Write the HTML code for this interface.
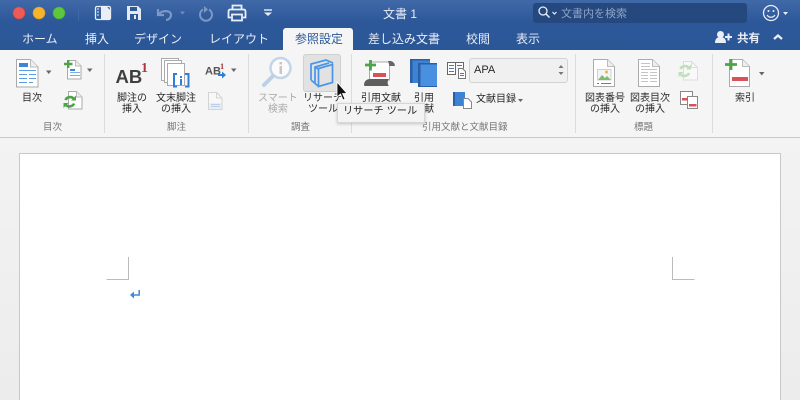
<!DOCTYPE html>
<html lang="ja"><head><meta charset="utf-8">
<style>
html{margin:0;padding:0;width:800px;height:400px;overflow:hidden}
body{margin:0;padding:0;width:800px;height:400px;overflow:hidden;position:relative;background:#ededed;font-family:"Liberation Sans","Noto Sans CJK JP",sans-serif}
.a{position:absolute}
.t{position:absolute;white-space:nowrap;text-align:center;line-height:10.500px;font-size:10px;color:#2a2a2a}
.tab{position:absolute;top:31px;line-height:17px;font-size:12px;color:#e9eef7;white-space:nowrap}
.g{position:absolute;top:122px;line-height:12px;font-size:9.500px;color:#777;white-space:nowrap;text-align:center}
.sep{position:absolute;top:54px;height:79px;width:1px;background:#dcdcdc}
</style></head><body>
<div class="a" style="left:0;top:0;width:800px;height:50px;background:linear-gradient(#4069a8,#2c5798 45%,#2b5797)"></div>
<div class="a" style="left:0;top:50px;width:800px;height:87px;background:#f5f5f5;border-bottom:1px solid #c9c9c9"></div>
<div class="a" style="left:0;top:138px;width:800px;height:262px;background:linear-gradient(#f3f3f3,#ececec)"></div>
<div class="a" style="left:19px;top:153px;width:760px;height:247px;background:#fff;border:1px solid #c8c8c8;border-bottom:0"></div>

<div class="a" style="left:283px;top:28px;width:70px;height:22px;background:#f5f5f5;border-radius:3px 3px 0 0"></div>
<div class="tab" style="left:22px">ホーム</div>
<div class="tab" style="left:85px">挿入</div>
<div class="tab" style="left:134px">デザイン</div>
<div class="tab" style="left:209px">レイアウト</div>
<div class="tab" style="left:295px;color:#2b5797">参照設定</div>
<div class="tab" style="left:368px">差し込み文書</div>
<div class="tab" style="left:466px">校閲</div>
<div class="tab" style="left:516px">表示</div>
<div class="tab" style="left:737px;font-weight:bold;font-size:11.500px">共有</div>
<div class="t" style="left:383px;top:7px;font-size:12px;line-height:15px;color:#e9eef7">文書 1</div>
<div class="a" style="left:533px;top:3px;width:214px;height:20px;background:#25497f;border-radius:3px"></div>
<div class="t" style="left:561px;top:7px;font-size:11px;line-height:14px;color:#8ea4c6">文書内を検索</div>

<div class="a" style="left:303px;top:54px;width:36px;height:36px;background:#e2e2e2;border:1px solid #cfcfcf;border-radius:3px"></div>

<svg class="a" style="left:0;top:0" width="800" height="400" viewBox="0 0 800 400">
<!-- traffic lights -->
<circle cx="19" cy="13" r="6" fill="#ee5a55" stroke="#c94440" stroke-width=".6"/>
<circle cx="39" cy="13" r="6" fill="#f4b42e" stroke="#d0952a" stroke-width=".6"/>
<circle cx="59" cy="13" r="6" fill="#5fc63f" stroke="#47a330" stroke-width=".6"/>
<path d="M78.500 6v15" stroke="#3f68a6"/>
<!-- sidebar -->
<rect x="95.500" y="6.500" width="15" height="13" rx="1.500" fill="none" stroke="#e9eef7" stroke-width="1.300"/>
<path d="M101 7h6l4 4v8h-10z" fill="#e9eef7"/><path d="M97 9h2M97 12h2M97 15h2" stroke="#e9eef7"/>
<!-- save -->
<path d="M127 6h11l3 3v11h-14z" fill="#e4e9f2"/><rect x="130" y="7" width="7" height="4" fill="#2f5a9a"/><rect x="130" y="14" width="8" height="6" fill="#2f5a9a"/><rect x="134" y="15" width="2" height="4" fill="#e4e9f2"/>
<!-- undo -->
<path d="M158 9v6h6" fill="none" stroke="#7c98c4" stroke-width="2.200"/><path d="M159 14c3-4 12-4 12 1 0 3-3 5-5 5" fill="none" stroke="#7c98c4" stroke-width="2.200"/>
<path d="M180 11.500h5l-2.500 3z" fill="#7290bd"/>
<!-- redo -->
<path d="M203 9.500a6 6 0 1 0 6 0" fill="none" stroke="#7c98c4" stroke-width="2"/><path d="M204 6v7l4-3.500z" fill="#7c98c4"/>
<!-- print -->
<path d="M232.500 9V5.500h9V9" fill="none" stroke="#e9eef7" stroke-width="1.800"/><path d="M231 17.500h-2.500v-6q0-2 2-2h13q2 0 2 2v6H243" fill="none" stroke="#e9eef7" stroke-width="1.800"/><rect x="232" y="14.500" width="10" height="6" fill="none" stroke="#e9eef7" stroke-width="1.800"/>
<!-- qat dropdown -->
<path d="M264 10h8" stroke="#e9eef7" stroke-width="1.400"/><path d="M264 12.500h8l-4 3.500z" fill="#e9eef7"/>
<!-- search -->
<circle cx="543" cy="11" r="4" fill="none" stroke="#e9eef7" stroke-width="1.300"/><path d="M546 14l3.500 3.500" stroke="#e9eef7" stroke-width="1.500"/><path d="M552.500 12l2 2 2-2" fill="none" stroke="#e9eef7" stroke-width="1.200"/>
<!-- smiley -->
<circle cx="771" cy="13" r="7.500" fill="none" stroke="#e9eef7" stroke-width="1.300"/><circle cx="768.500" cy="11" r="1" fill="#e9eef7"/><circle cx="773.500" cy="11" r="1" fill="#e9eef7"/><path d="M767 15c2 3 6 3 8 0" fill="none" stroke="#e9eef7" stroke-width="1.200"/>
<path d="M783 12h5l-2.500 3z" fill="#e9eef7"/>
<!-- share person -->
<circle cx="720.500" cy="34.500" r="3.500" fill="#e9eef7"/><path d="M715 43q0-6 5.500-6t5.500 6z" fill="#e9eef7"/><path d="M725 37h7M728.500 33.500v7" stroke="#e9eef7" stroke-width="2"/>
<path d="M774 39l4-3.500 4 3.500" fill="none" stroke="#e9eef7" stroke-width="2.200"/>

<!-- 目次 -->
<path d="M16.500 59.500h14l7.500 7.500v20h-21.500z" fill="#fff" stroke="#aaa"/><path d="M30.500 59.500v7.500h7.500" fill="#eee" stroke="#bbb"/>
<rect x="19" y="63" width="9" height="4" fill="#3d85d8"/>
<path d="M19 70.500h17M19 74.500h8M29 74.500h7M19 78.500h8M29 78.500h7M19 82.500h8M29 82.500h4" stroke="#5a9ce6"/>
<path d="M46 70.500h5.500l-2.750 3.500z" fill="#666"/>
<!-- add text -->
<path d="M67.500 60.500h8l5.500 5.500v13h-13.500z" fill="#fff" stroke="#aaa"/><path d="M75.500 60.500v5.500h5.500" fill="#eee" stroke="#bbb"/>
<path d="M64 64h8.500M68.200 60v8" stroke="#4ea348" stroke-width="2.400"/>
<rect x="70" y="69" width="5" height="2" fill="#3d85d8"/><path d="M70 72.500h10M70 75.500h10" stroke="#7aaee8"/>
<path d="M87 68.500h5.500l-2.750 3.500z" fill="#666"/>
<!-- update -->
<path d="M68.500 91.500h8l5.500 5.500v12h-13.500z" fill="#fff" stroke="#aaa"/><path d="M76.500 91.500v5.500h5.500" fill="#eee" stroke="#bbb"/>
<path d="M65.500 100c1-3 6-4 8-1.500M74 103.500c-1 3-6 4-8 1.500" fill="none" stroke="#4ea348" stroke-width="2.600"/><path d="M71 100.500h5v-5zM68.500 103h-5v5z" fill="#4ea348"/>

<!-- AB1 -->
<text x="115.500" y="83" font-size="18.500" font-weight="bold" fill="#3f3f3f" font-family="Liberation Sans">AB</text>
<text x="141" y="72" font-size="14" font-weight="bold" fill="#a9383c" font-family="Liberation Serif">1</text>
<!-- endnote -->
<path d="M161.500 58.500h17v22h-17z" fill="#fff" stroke="#aaa"/><path d="M164.500 60.500h17v22h-17z" fill="#fff" stroke="#aaa"/><path d="M167.500 63.500h17v22h-17z" fill="#fff" stroke="#aaa"/>
<path d="M177 74h-3v12.500h3M185 74h3.500v12.500H185" fill="none" stroke="#2f7fd8" stroke-width="2"/>
<rect x="180" y="76" width="2" height="2" fill="#2f7fd8"/><rect x="180" y="79" width="2" height="6" fill="#2f7fd8"/>
<!-- AB next -->
<text x="205" y="74.500" font-size="11" font-weight="bold" fill="#555" font-family="Liberation Sans">AB</text>
<text x="220" y="69" font-size="8.500" font-weight="bold" fill="#a9383c" font-family="Liberation Serif">1</text>
<path d="M218 74h4v-2.500l4 3.500-4 3.500v-2.500h-4z" fill="#2f7fd8"/>
<path d="M231 68.500h5.500l-2.750 3.500z" fill="#666"/>
<!-- show notes disabled -->
<path d="M208.500 92.500h8l5.500 5.500v11.500h-13.500z" fill="#f8f8f8" stroke="#d4d4d4"/><path d="M216.500 92.500v5.500h5.500" fill="none" stroke="#d4d4d4"/>
<rect x="209" y="103" width="12.500" height="6" fill="#e6eef8"/><path d="M211 104.500h9M211 106.500h9" stroke="#b7cfe9"/>

<!-- smart lookup -->
<circle cx="280.500" cy="68" r="10" fill="#fbfbfb" stroke="#c4d5e8" stroke-width="2.500"/>
<path d="M273 76l-9 9" stroke="#bcd0e6" stroke-width="4" stroke-linecap="round"/>
<rect x="279.500" y="62" width="2.500" height="2.500" fill="#c6c6c6"/><rect x="279.500" y="66" width="2.500" height="8" fill="#c6c6c6"/>
<!-- researcher -->
<path d="M311 80V64l15-4 7 3" fill="none" stroke="#4a95e8" stroke-width="1.700"/>
<path d="M315 83.500V67l14-4" fill="none" stroke="#4a95e8" stroke-width="1.700"/>
<path d="M311 80l7 6M315 67l3 2" fill="none" stroke="#4a95e8" stroke-width="1.700"/>
<path d="M318.500 68.500l14-4v18l-14 4z" fill="#e2e2e2" stroke="#4a95e8" stroke-width="1.700"/>
<!-- insert citation -->
<path d="M369.500 62h20v18h-20z" fill="#fff" stroke="#aaa"/>
<path d="M388 61h3q3.500 1 4 5h-5.500z" fill="#666"/>
<path d="M364 85c0-4 3-6 6-6h19c-2 2-1.500 6 0 7h-24q-1 0-1-1z" fill="#5e5e5e"/>
<rect x="373" y="73" width="13" height="4" fill="#d9525a"/>
<path d="M365 65h11M370.500 60v10.500" stroke="#4ea348" stroke-width="2.800"/>
<!-- books -->
<rect x="410" y="59" width="20" height="24" fill="#3e82d3"/><rect x="410" y="59" width="2.500" height="24" fill="#2a5fa8"/><rect x="410" y="59" width="20" height="1.500" fill="#2a5fa8"/>
<rect x="418" y="63" width="19" height="24" fill="#4a90e0"/><rect x="418" y="63" width="2.500" height="24" fill="#2a5fa8"/><rect x="418" y="63" width="19" height="1.500" fill="#2a5fa8"/><rect x="418" y="86" width="19" height="1" fill="#2a5fa8"/>
<!-- style -->
<path d="M447.500 62.500h8v12h-8zM455.500 62.500h8v6" fill="#fff" stroke="#666"/>
<path d="M449 65.500h5M449 68.500h5M449 71.500h5M457 65.500h5" stroke="#4a78b0" stroke-width=".9"/>
<path d="M458.500 68.500h4l3 3v7h-7z" fill="#fff" stroke="#777"/><path d="M460 73.500h4M460 75.500h4" stroke="#4a78b0" stroke-width=".9"/>
<!-- bibliography -->
<rect x="453" y="92" width="12" height="14" fill="#3e82d3"/><rect x="453" y="92" width="2" height="14" fill="#2a5fa8"/>
<path d="M463.500 98.500h4.500l3.500 3.500v6.500h-8z" fill="#fff" stroke="#888"/>
<path d="M518 99h5l-2.500 3z" fill="#666"/>
<!-- caption -->
<path d="M593.500 59.500h14l7 7v20h-21z" fill="#fff" stroke="#aaa"/><path d="M607.500 59.500v7h7" fill="#eee" stroke="#bbb"/>
<rect x="597.500" y="69.500" width="13.500" height="10.500" fill="#f4f4f4" stroke="#d0d0d0"/><path d="M598 80l4-5 3 3 2-2 4 4z" fill="#7ebc6f"/><circle cx="606.500" cy="72" r="1.500" fill="#f3b23f"/>
<path d="M597 83.500h2M601 83.500h10" stroke="#d9525a"/>
<!-- TOF -->
<path d="M638.500 59.500h14l7 7v20h-21z" fill="#fff" stroke="#aaa"/><path d="M652.500 59.500v7h7" fill="#eee" stroke="#bbb"/>
<path d="M641 63.500h9M641 66.500h9M641 69.500h16M641 72.500h7M650 72.500h7M641 75.500h7M650 75.500h7M641 78.500h7M650 78.500h7M641 81.500h7M650 81.500h7" stroke="#c4c4c4"/>
<!-- update disabled -->
<path d="M683.500 61.500h8l6 6v12.500h-14z" fill="#f9f9f9" stroke="#ddd"/><path d="M691.500 61.500v6h6" fill="none" stroke="#ddd"/>
<path d="M680.500 69c1-3 6-4 8-1.500M689 73c-1 3-6 4-8 1.500" fill="none" stroke="#bfe0bb" stroke-width="2.600"/><path d="M686 69.500h5v-5zM683.500 72h-5v5z" fill="#bfe0bb"/>
<!-- cross ref -->
<rect x="680.500" y="91.500" width="12" height="13" fill="#fff" stroke="#888"/><rect x="687.500" y="96.500" width="10" height="12" fill="#fff" stroke="#888"/>
<rect x="682" y="98" width="6" height="2.500" fill="#d9525a"/><rect x="689" y="104" width="7.500" height="2.500" fill="#d9525a"/>
<!-- index -->
<path d="M729.500 59.500h13l7 7v20h-20z" fill="#fff" stroke="#aaa"/><path d="M742.500 59.500v7h7" fill="#eee" stroke="#bbb"/>
<path d="M725 64.500h12M731 59v11" stroke="#4ea348" stroke-width="2.800"/>
<rect x="732" y="77" width="16" height="4" fill="#d9525a"/>
<path d="M759 72h5.500l-2.750 3.500z" fill="#666"/>
<path d="M128.500 257v22.500h-22M672.500 257v22.500h22" fill="none" stroke="#bbb"/>
<!-- paragraph mark -->
<path d="M139.200 290v5h-6" fill="none" stroke="#3f88de" stroke-width="1.500"/><path d="M130 295l4-3.500v7z" fill="#3f88de"/>
</svg>

<!-- combo -->
<div class="a" style="left:469px;top:58px;width:97px;height:23px;background:#f0f0f0;border:1px solid #d2d2d2;border-radius:3px"></div>
<svg class="a" style="left:550px;top:55px" width="20" height="26"><path d="M8.500 13l2.500-3 2.500 3zM8.500 17l2.500 3 2.500-3z" fill="#777"/></svg>
<div class="t" style="left:474px;top:65px;font-size:11px">APA</div>

<div class="t" style="left:22px;top:94px">目次</div>
<div class="t" style="left:117px;top:94px">脚注の<br>挿入</div>
<div class="t" style="left:156px;top:94px">文末脚注<br>の挿入</div>
<div class="t" style="left:258px;top:94px;color:#aaa">スマート<br>検索</div>
<div class="t" style="left:303px;top:94px">リサーチ<br>ツール</div>
<div class="t" style="left:361px;top:94px">引用文献</div>
<div class="t" style="left:414px;top:94px">引用<br>文献</div>
<div class="t" style="left:476px;top:95px">文献目録</div>
<div class="t" style="left:585px;top:94px">図表番号<br>の挿入</div>
<div class="t" style="left:630px;top:94px">図表目次<br>の挿入</div>
<div class="t" style="left:735px;top:94px">索引</div>

<div class="sep" style="left:104px"></div><div class="sep" style="left:248px"></div><div class="sep" style="left:351px"></div><div class="sep" style="left:575px"></div><div class="sep" style="left:712px"></div>
<div class="g" style="left:43px">目次</div>
<div class="g" style="left:167px">脚注</div>
<div class="g" style="left:291px">調査</div>
<div class="g" style="left:422px">引用文献と文献目録</div>
<div class="g" style="left:634px">標題</div>

<!-- tooltip -->
<div class="a" style="left:337px;top:103px;width:86px;height:18px;background:#f3f3f3;border:1px solid #d6d6d6;box-shadow:0 1px 3px rgba(0,0,0,.2)"></div>
<div class="t" style="left:343px;top:107px;font-size:10.200px;color:#222">リサーチ ツール</div>
<svg class="a" style="left:334px;top:81px" width="16" height="22"><path d="M3 1v15l3.500-3 2.500 6 2-1-2.500-5.500h4.500z" fill="#111" stroke="#fff" stroke-width=".8"/></svg>
</body></html>
